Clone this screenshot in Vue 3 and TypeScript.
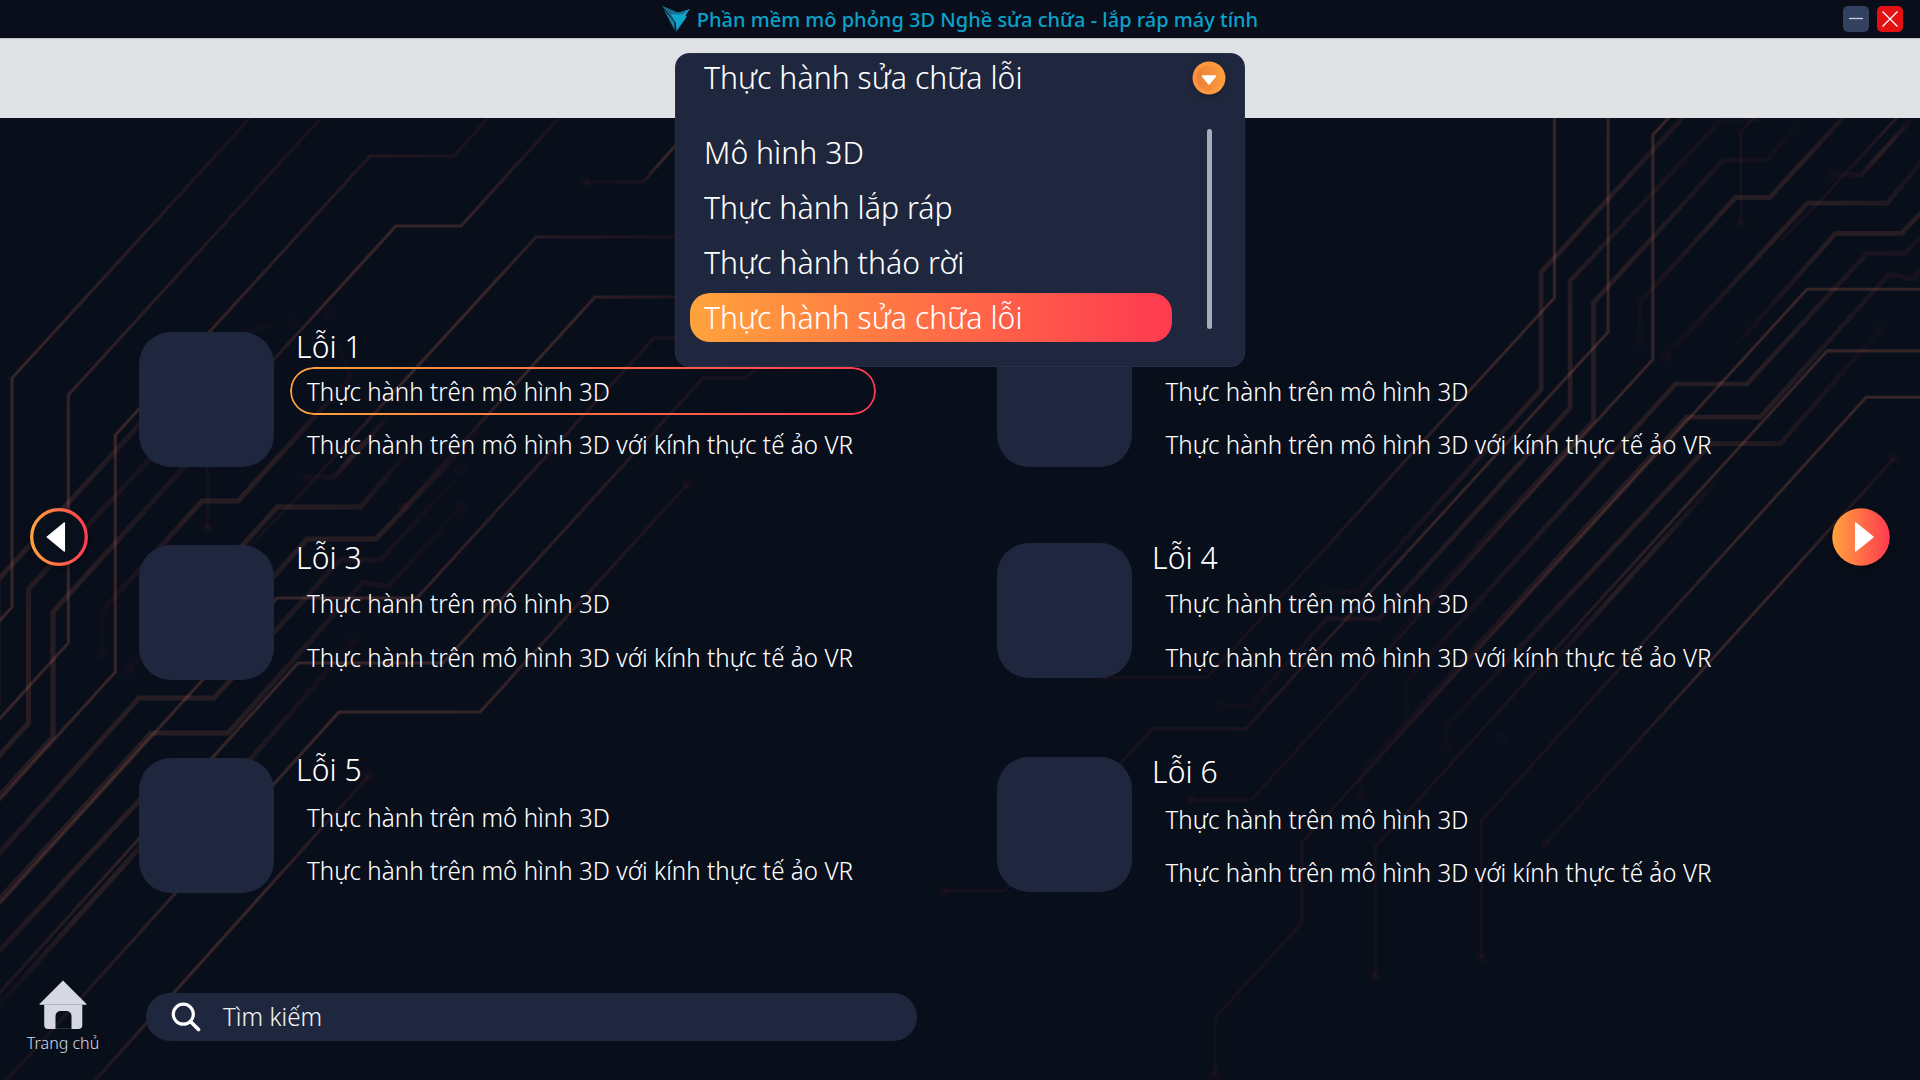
<script setup lang="ts">
interface Fault {
  name: string
  thumb: number
  lead: number
  gapA: number
  gapB: number
  active?: boolean
}

const appTitle = 'Phần mềm mô phỏng 3D Nghề sửa chữa - lắp ráp máy tính'
const modes: string[] = ['Mô hình 3D', 'Thực hành lắp ráp', 'Thực hành tháo rời', 'Thực hành sửa chữa lỗi']
const selected = 'Thực hành sửa chữa lỗi'
const practice: string[] = ['Thực hành trên mô hình 3D', 'Thực hành trên mô hình 3D với kính thực tế ảo VR']

const faults: Fault[] = [
  { name: 'Lỗi 1', thumb: 4, lead: 0, gapA: 3, gapB: 5, active: true },
  { name: 'Lỗi 2', thumb: 4, lead: 0, gapA: 3, gapB: 5 },
  { name: 'Lỗi 3', thumb: 6, lead: 0, gapA: 4, gapB: 6 },
  { name: 'Lỗi 4', thumb: 4, lead: 0, gapA: 4, gapB: 6 },
  { name: 'Lỗi 5', thumb: 7, lead: 0, gapA: 6, gapB: 5 },
  { name: 'Lỗi 6', thumb: 5.5, lead: 2, gapA: 6, gapB: 5 },
]

const thin: string[] = [
  'M250 118L12 378V607L-352.6 1008H-461.7',
  'M321 118L68.3 395V643L-311.6 1062H-410L-565.6 1233H-628.5',
  'M488 118L454 156H370L115.3 435V672L-306 1137H-370',
  'M559 118L461 226H396L207.5 432V528',
  'M675 237H536L295 500L249 547',
  'M740 297H595L404 507',
  'M720 338H654L417 598H277L-253 1182V1267L-344 1367V1427',
  'M760 366L745 378H703L443 663H298L-176 1187V1324',
  'M687.5 484L480 712H339L-64.5 1159V1304',
  'M368.6 776L2.8 1183',
  'M700 118L643 182H585.5',
]
const thick: string[] = [
  'M274 323L210 347L-2 580V704L-195 918H-250',
  'M232 419H187L28.5 589V723L-172 946H-227L-308 1038H-338',
  'M269 421L235 461.5H189L53 612V737L-160 970',
  'M338 345L351 377L238 501H202L102 611V655',
  'M421 435L361 507H277.5L128 670',
  'M388 417L334 477H304',
  'M480 430L376 539H307L200 660',
  'M455 480L380 560H340L214 698H139L-143 1011V1056',
  'M461 507L388 587L363 582L228 733H151L-191 1108V1135',
  'M354 640L249 761H176L-102 1060V1081',
  'M185 797L-3 1007',
]
const dots: number[][] = [
  [-461.7, 1008, 5], [-628.5, 1233, 5], [-370, 1137, 5], [207.5, 528, 5], [404, 507, 5],
  [-344, 1427, 5], [-176, 1324, 5], [-64.5, 1304, 5], [687.5, 484, 5], [368.6, 776, 5],
  [2.8, 1183, 5], [585.5, 182, 5], [295, 323, 7], [329, 313, 7], [102, 655, 7], [128, 670, 7],
  [304, 477, 7], [461, 470, 7], [461, 507, 7], [354, 640, 7], [-338, 1038, 7], [-191, 1135, 7],
  [-102, 1081, 7], [-43, 1071, 7],
]
</script>

<template>
  <div class="screen">
    <svg class="circuit" width="1920" height="1080" viewBox="0 0 1920 1080" aria-hidden="true">
      <defs>
        <linearGradient id="traceA" x1="1" y1="0" x2="0" y2="1">
          <stop offset="0" stop-color="#ff5040" stop-opacity=".06" />
          <stop offset=".3" stop-color="#ff8c60" stop-opacity=".18" />
          <stop offset=".55" stop-color="#ff8c60" stop-opacity=".17" />
          <stop offset=".78" stop-color="#ff5a48" stop-opacity=".065" />
          <stop offset="1" stop-color="#ff4040" stop-opacity=".045" />
        </linearGradient>
        <linearGradient id="traceB" x1="1" y1="0" x2="0" y2="1">
          <stop offset="0" stop-color="#ff5040" stop-opacity=".02" />
          <stop offset=".35" stop-color="#ff8c60" stop-opacity=".12" />
          <stop offset=".6" stop-color="#ff8c60" stop-opacity=".12" />
          <stop offset="1" stop-color="#ff4040" stop-opacity=".02" />
        </linearGradient>
        <g id="board" fill="none" stroke-linejoin="miter">
          <path v-for="d in thick" :key="d" :d="d" stroke="url(#traceB)" stroke-width="5" />
          <path v-for="d in thin" :key="d" :d="d" stroke="url(#traceA)" stroke-width="3.2" />
          <circle
            v-for="(c, i) in dots" :key="i" :cx="c[0]" :cy="c[1]" :r="c[2]"
            fill="#ff4040" :fill-opacity="c[2] > 5 ? 0.025 : 0.045"
          />
        </g>
      </defs>
      <use href="#board" />
      <use href="#board" transform="matrix(.953 0 0 .947 1543 -277)" />
    </svg>

    <header class="titlebar">
      <div class="brand">
        <svg width="28" height="26" viewBox="0 0 28 26">
          <path d="M0 0L25 10.500L14 26L13 17Z" fill="#0ea0c8" />
          <path d="M0 0L20 9L15 17.500Z" fill="#1b6a8c" />
          <path d="M9 8L24 9L15.500 21Z" fill="#10a5cd" />
          <path d="M1 2L12.500 16V24Z" fill="#1b7fa5" />
          <path d="M0 .5L13.300 16.500L14 26" stroke="#0a0d1a" stroke-width=".9" fill="none" />
          <path d="M16 7L28 3L22 11.500Z" fill="#16a3c9" />
          <path d="M15 7L28 3L20.500 8.500Z" fill="#1c7192" />
        </svg>
        <h1>{{ appTitle }}</h1>
      </div>
      <div class="window-buttons">
        <button class="minimise" aria-label="Minimise">
          <svg width="26" height="26" viewBox="0 0 26 26"><path d="M6 12.500H20" stroke="#c9cfdb" stroke-width="1.300" /></svg>
        </button>
        <button class="close" aria-label="Close">
          <svg width="26" height="26" viewBox="0 0 26 26"><path d="M5.500 5.500L20.500 20.500M20.500 5.500L5.500 20.500" stroke="#fff" stroke-width="1.300" /></svg>
        </button>
      </div>
    </header>
    <div class="band"></div>

    <main class="content">
      <button class="nav" aria-label="Previous">
        <svg width="70" height="70" viewBox="0 0 70 70">
          <defs>
            <linearGradient id="warm"><stop offset="0" stop-color="#ffa33c" /><stop offset="1" stop-color="#ff3a50" /></linearGradient>
          </defs>
          <circle cx="35" cy="35" r="27.300" fill="#0a0f1c" stroke="url(#warm)" stroke-width="3.300" />
          <path d="M23.300 35L40.300 21V49Z" fill="#fff" stroke="#fff" stroke-width="1.500" stroke-linejoin="round" />
        </svg>
      </button>
      <section class="faults">
        <article v-for="f in faults" :key="f.name" class="fault">
          <div class="thumb" :style="{ marginTop: f.thumb + 'px' }"></div>
          <div class="info" :style="{ paddingTop: f.lead + 'px' }">
            <h2>{{ f.name }}</h2>
            <p
              v-for="(p, i) in practice" :key="p" :class="{ active: f.active && i === 0 }"
              :style="{ marginTop: (i === 0 ? f.gapA : f.gapB) + 'px' }"
            >{{ p }}</p>
          </div>
        </article>
      </section>
      <button class="nav" aria-label="Next">
        <svg width="70" height="70" viewBox="0 0 70 70">
          <circle cx="35" cy="35" r="28.800" fill="url(#warm)" />
          <path d="M47 35L29.700 21V49Z" fill="#fff" stroke="#fff" stroke-width="1.500" stroke-linejoin="round" />
        </svg>
      </button>
    </main>

    <footer class="bottom">
      <a class="home">
        <svg width="48" height="49" viewBox="0 0 48 49">
          <path d="M24 .5L48 24.500H0Z" fill="#d5d8e2" />
          <path d="M5.200 24.500H43.300V45a4 4 0 0 1-4 4H32.500V36a5 5 0 0 0-5-5H21.500a5 5 0 0 0-5 5V49H9.200a4 4 0 0 1-4-4Z" fill="#d5d8e2" />
          <path d="M1 24.500H47" stroke="#b4b8c4" stroke-width=".8" />
          <path d="M16 48.700H33" stroke="#596070" stroke-width=".5" />
        </svg>
        <span>Trang chủ</span>
      </a>
      <label class="search">
        <svg width="30" height="30" viewBox="0 0 30 30" fill="none" stroke="#fff">
          <circle cx="12.300" cy="12.200" r="10" stroke-width="3.200" />
          <path d="M19.500 19.500L27.500 27.500" stroke-width="3.600" stroke-linecap="round" />
        </svg>
        <span>Tìm kiếm</span>
      </label>
    </footer>

    <div class="dropdown">
      <div class="current">
        <span>{{ selected }}</span>
        <svg width="42" height="42" viewBox="0 0 42 42">
          <defs>
            <linearGradient id="knob"><stop offset="0" stop-color="#ff8f40" /><stop offset="1" stop-color="#ffa03c" /></linearGradient>
            <linearGradient id="knobIn"><stop offset="0" stop-color="#ea8238" /><stop offset="1" stop-color="#fb9a3c" /></linearGradient>
          </defs>
          <circle cx="21" cy="21" r="16.500" fill="url(#knob)" />
          <circle cx="21" cy="21" r="12.500" fill="url(#knobIn)" />
          <path d="M14.500 19H27.500L21 27Z" fill="#fff" stroke="#fff" stroke-width="1.500" stroke-linejoin="round" />
        </svg>
      </div>
      <div class="menu">
        <ul>
          <li v-for="m in modes" :key="m" :class="{ chosen: m === selected }">{{ m }}</li>
        </ul>
        <div class="scrollbar"></div>
      </div>
    </div>
  </div>
</template>

<style>
body {
  margin: 0;
  background: #090e1b;
}
</style>

<style scoped>
.screen {
  position: relative;
  width: 1920px;
  height: 1080px;
  overflow: hidden;
  display: flex;
  flex-direction: column;
  background: #090e1b;
  color: #fff;
  font-family: "Noto Sans Display", "Noto Sans", "Open Sans", sans-serif;
  font-weight: 300;
}
.circuit {
  position: absolute;
  inset: 0;
}
button {
  padding: 0;
  border: 0;
  background: none;
}
svg {
  display: block;
}
h1, h2, p, ul {
  margin: 0;
  padding: 0;
}
.titlebar {
  position: relative;
  height: 38px;
  background: #0a0d1a;
  border-bottom: 1px solid #c3c4cb;
  display: flex;
  justify-content: center;
}
.brand {
  display: flex;
  align-items: center;
  gap: 7px;
}
.brand h1 {
  font-family: "Noto Sans", sans-serif;
  font-size: 20px;
  font-weight: 500;
  line-height: 26px;
  padding-top: 2px;
  color: #08a2ca;
  white-space: nowrap;
}
.window-buttons {
  position: absolute;
  right: 17px;
  top: 6px;
  display: flex;
  gap: 8px;
}
.window-buttons button {
  width: 26px;
  height: 26px;
  border-radius: 5px;
}
.minimise {
  background: #31415f;
}
.close {
  background: #e31212;
}
.band {
  position: relative;
  height: 79px;
  background: #e1e2e6;
}
.content {
  position: relative;
  display: flex;
  height: 838px;
  flex: none;
}
.nav {
  width: 70px;
  height: 70px;
  margin: 384px 0 0 24px;
  flex: none;
  filter: drop-shadow(0 3px 3px rgba(0, 0, 0, .4));
}
.faults {
  display: grid;
  grid-template-columns: 858px 844px;
  grid-template-rows: 211px 212px 200px;
  width: 1687px;
  padding: 210px 0 0 45px;
  box-sizing: border-box;
  flex: none;
}
.fault {
  display: flex;
  gap: 16px;
}
.fault:nth-child(even) {
  gap: 17px;
}
.thumb {
  width: 135px;
  height: 135px;
  border-radius: 32px;
  background: #1f273e;
  flex: none;
}
.info h2 {
  margin-left: 6px;
  font-size: 32px;
  line-height: 36px;
  font-weight: 300;
  letter-spacing: .05px;
}
.fault:nth-child(even) h2 {
  margin-left: 3px;
}
.info p {
  width: 585px;
  height: 48px;
  box-sizing: border-box;
  padding-left: 17px;
  font-size: 25.6px;
  letter-spacing: .05px;
  line-height: 49px;
  border-radius: 24px;
  white-space: nowrap;
  position: relative;
}
.fault:nth-child(even) p {
  padding-left: 16.5px;
}
.info p.active::before {
  content: "";
  position: absolute;
  inset: 0 -1px 0 0;
  padding: 2.4px;
  border-radius: 24px;
  background: linear-gradient(90deg, #ffa33c, #ff3a50);
  mask: linear-gradient(#000 0 0) content-box exclude, linear-gradient(#000 0 0);
}
.faults + .nav {
  margin-left: 45px;
}
.bottom {
  position: relative;
  display: flex;
  height: 124px;
}
.home {
  width: 126px;
  padding-top: 24px;
  display: flex;
  flex-direction: column;
  align-items: center;
  color: #d5d8e2;
}
.home span {
  font-size: 17px;
  line-height: 22px;
  margin-top: 3px;
}
.search {
  margin: 37px 0 0 20px;
  width: 771px;
  height: 48px;
  border-radius: 24px;
  background: #1f273e;
  display: flex;
  align-items: center;
  font-size: 25.6px;
  letter-spacing: .05px;
  line-height: 48px;
  box-sizing: border-box;
  padding-left: 25px;
}
.search span {
  margin-left: 22px;
  color: #f0f1f4;
}
.dropdown {
  position: absolute;
  left: 675px;
  top: 52.5px;
  width: 570px;
  height: 314px;
  border-radius: 14px;
  background: #1f273e;
  box-sizing: border-box;
  border: 1px solid #27304a;
  font-size: 32px;
  letter-spacing: .05px;
}
.current {
  display: flex;
  justify-content: space-between;
  align-items: center;
  height: 48px;
  padding: 0 14px 0 28px;
  line-height: 48px;
}
.current span {
  margin-top: -1.5px;
}
.current svg {
  margin-top: 1px;
  filter: drop-shadow(0 2px 2px rgba(0, 0, 0, .3));
}
.menu {
  display: flex;
  justify-content: space-between;
  padding: 26.5px 32.5px 0 14px;
}
.menu ul {
  list-style: none;
  width: 482px;
  display: grid;
  row-gap: 6px;
}
.menu li {
  height: 49px;
  line-height: 47px;
  padding-left: 14px;
  border-radius: 20px;
}
.menu li.chosen {
  background: linear-gradient(90deg, #ffa33c, #ff3a50);
}
.scrollbar {
  width: 4.5px;
  height: 200px;
  margin-top: 1px;
  border-radius: 3px;
  background: #a9abb6;
}
</style>
